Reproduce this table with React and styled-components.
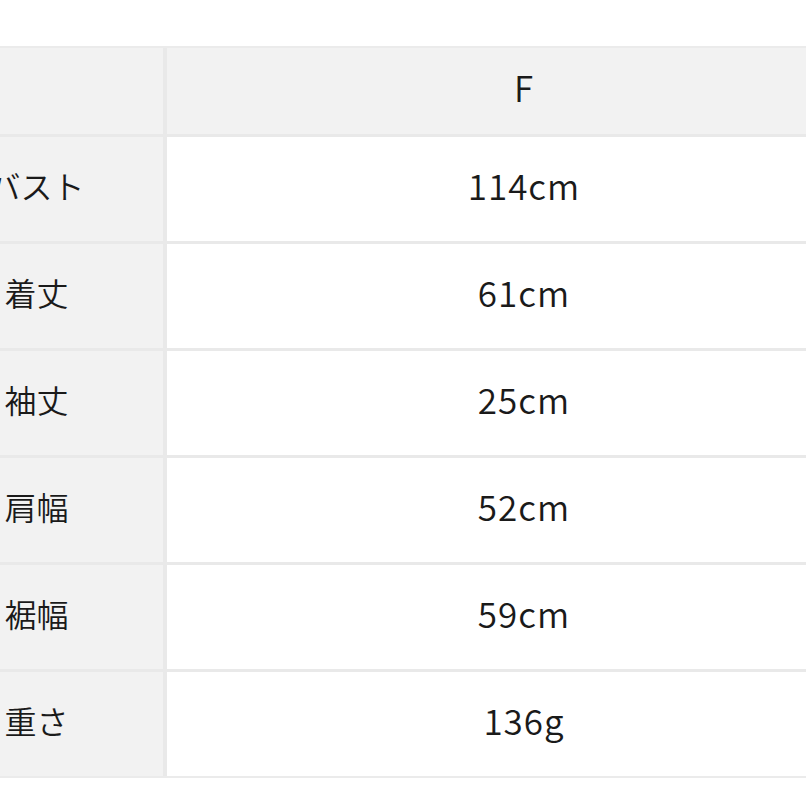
import React from 'react';
import styled, { createGlobalStyle } from 'styled-components';

const GlobalStyle = createGlobalStyle`
  html, body {
    margin: 0;
    padding: 0;
    background: #fff;
  }
  body {
    font-family: "Noto Sans CJK JP", "Noto Sans", sans-serif;
    color: #1a1a1a;
  }
`;

const Page = styled.div`
  width: 806px;
  height: 806px;
  overflow: hidden;
  padding-top: 46px;
  box-sizing: border-box;
`;

const Table = styled.div`
  display: grid;
  grid-template-columns: 253px 714px;
  grid-template-rows: 86px repeat(6, 104px);
  column-gap: 4px;
  row-gap: 3px;
  width: 971px;
  margin-left: -90px;
  background: #e9e9e9;
  border-top: 2px solid #ebebeb;
  border-bottom: 2px solid #ebebeb;
`;

const Cell = styled.div`
  display: flex;
  align-items: center;
  justify-content: center;
  padding-bottom: ${(p) => (p.$label ? '9px' : '10px')};
  box-sizing: border-box;
  background: ${(p) => (p.$head ? '#f2f2f2' : '#fff')};
  font-size: ${(p) => (p.$label ? '32px' : '35px')};
  font-weight: 350;
  line-height: 1;
  letter-spacing: ${(p) => (p.$label ? '0' : '1px')};
`;

const rows = [
  ['バスト', '114cm'],
  ['着丈', '61cm'],
  ['袖丈', '25cm'],
  ['肩幅', '52cm'],
  ['裾幅', '59cm'],
  ['重さ', '136g'],
];

export default function App() {
  return (
    <>
      <GlobalStyle />
      <Page>
        <Table>
          <Cell $head />
          <Cell $head>F</Cell>
          {rows.map(([label, value]) => (
            <React.Fragment key={label}>
              <Cell $head $label>{label}</Cell>
              <Cell>{value}</Cell>
            </React.Fragment>
          ))}
        </Table>
      </Page>
    </>
  );
}
